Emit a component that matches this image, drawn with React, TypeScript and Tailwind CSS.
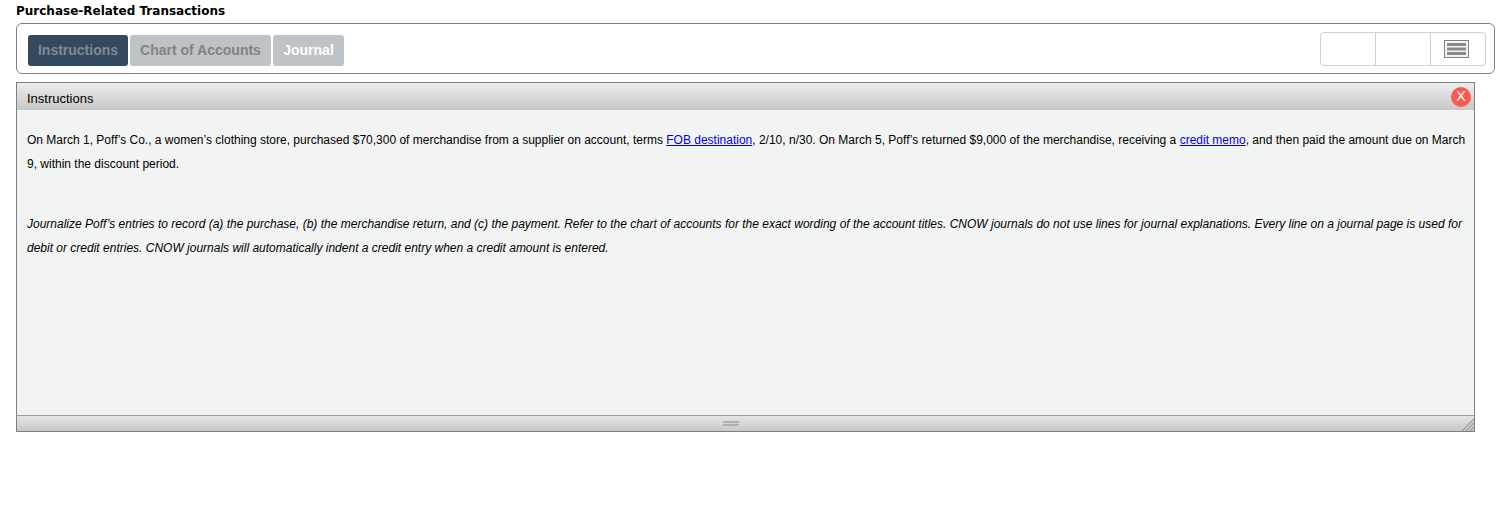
const tabs = [
  { label: "Instructions", cls: "w-[100px] bg-[#34495e] text-[#7f8a96]" },
  { label: "Chart of Accounts", cls: "w-[141px] bg-[#bdc3c7] text-[#7f8486]" },
  { label: "Journal", cls: "w-[71px] bg-[#bdc3c7] text-white" },
];

export default function App() {
  return (
    <div className="h-[506px] overflow-hidden bg-white pl-4 pr-3 font-['Liberation_Sans',Arial,sans-serif] text-black">
      <div className="h-[23px] pt-[3px] font-['DejaVu_Sans',Verdana,sans-serif] text-xs font-bold leading-4">
        Purchase-Related Transactions
      </div>

      {/* toolbar */}
      <div className="flex h-[51px] w-[1479px] items-start justify-between rounded-[6px] border border-[#808080] pl-[11px] pr-[8px] pt-[8px]">
        <div className="mt-[3px] flex gap-[2px]">
          {tabs.map((t) => (
            <div
              key={t.label}
              className={`flex h-[31px] items-center justify-center rounded-[3px] pb-[2px] text-sm font-bold ${t.cls}`}
            >
              {t.label}
            </div>
          ))}
        </div>
        <div className="flex h-[34px] w-[166px] rounded-[4px] border border-[#d0d0d0]">
          <div className="w-[55px] border-r border-[#d0d0d0]" />
          <div className="w-[55px] border-r border-[#d0d0d0]" />
          <div className="flex flex-1 items-center justify-center pr-[3px]">
            <svg width="25" height="18" viewBox="0 0 25 18">
              <rect x="0.5" y="0.5" width="24" height="17" fill="#f4f4f4" stroke="#808080" />
              <path d="M3 4.5h19M3 9h19M3 13.5h19" stroke="#8a8a8a" strokeWidth="3.2" />
            </svg>
          </div>
        </div>
      </div>

      {/* instructions panel */}
      <div className="mt-2 flex h-[350px] w-[1459px] flex-col border border-[#808080] bg-[#f2f4f3]">
        <div className="flex h-[27px] items-center justify-between bg-gradient-to-b from-[#ececec] to-[#c8c8c8] pl-[10px] pr-[3px]">
          <span className="mt-[5px] text-[13px]">Instructions</span>
          <span className="flex h-5 w-5 items-center justify-center rounded-full bg-[#fb5b4e] text-[15px] text-white">
            X
          </span>
        </div>

        <div className="flex-1 pl-[10px] pr-[8px] pt-[18px] text-xs leading-6">
          <p>
            On March 1, Poff’s Co., a women’s clothing store, purchased $70,300 of merchandise from a supplier on
            account, terms <span className="text-[#0000ee] underline">FOB destination</span>, 2/10, n/30. On March 5,
            Poff’s returned $9,000 of the merchandise, receiving a{" "}
            <span className="text-[#0000ee] underline">credit memo</span>, and then paid the amount due on March 9,
            within the discount period.
          </p>
          <p className="mt-9 italic">
            Journalize Poff’s entries to record (a) the purchase, (b) the merchandise return, and (c) the payment.
            Refer to the chart of accounts for the exact wording of the account titles. CNOW journals do not use lines
            for journal explanations. Every line on a journal page is used for debit or credit entries. CNOW journals
            will automatically indent a credit entry when a credit amount is entered.
          </p>
        </div>

        <div className="relative flex h-4 items-center justify-center border-t border-[#a0a0a0] bg-gradient-to-b from-[#e4e4e4] to-[#c8c8c8] pr-[30px]">
          <div className="h-[5px] w-4 border-y-2 border-[#b0b0b0]" />
          <svg className="absolute bottom-0 right-0" width="13" height="13" viewBox="0 0 13 13">
            <path d="M13 1L1 13M13 5L5 13M13 9L9 13" stroke="#a0a0a0" strokeWidth="1.3" />
          </svg>
        </div>
      </div>
    </div>
  );
}
